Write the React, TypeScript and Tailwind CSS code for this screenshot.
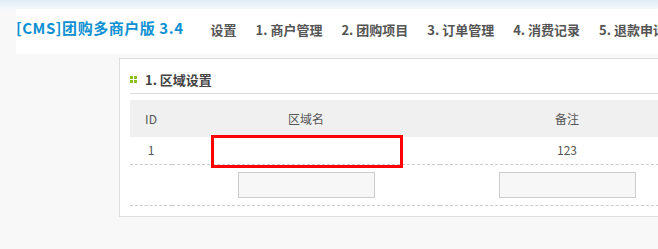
import React from 'react';

const navItems = ['设置', '1. 商户管理', '2. 团购项目', '3. 订单管理', '4. 消费记录', '5. 退款申请'];

const GreenDots: React.FC = () => (
  <span className="grid grid-cols-2 gap-px w-[7px] h-[7px] mr-[8px]">
    <span className="bg-[#8cbf1e]" />
    <span className="bg-[#8cbf1e]" />
    <span className="bg-[#8cbf1e]" />
    <span className="bg-[#8cbf1e]" />
  </span>
);

const App: React.FC = () => {
  return (
    <div className="w-[658px] h-[249px] overflow-hidden bg-[#f8f8f8] font-['Noto_Sans_CJK_SC','Microsoft_YaHei',sans-serif]">
      <div className="h-[9px] bg-gradient-to-b from-[#e2ecf7] to-[#f4f8fc]" />

      {/* header */}
      <div className="ml-4 h-[45px] pb-2 bg-white flex items-center whitespace-nowrap">
        <h1 className="text-[15px] font-bold text-[#0e90d2] leading-none tracking-[0.55px]">[CMS]团购多商户版 3.4</h1>
        <nav className="flex items-center gap-[19px] ml-[27px] mt-[3px] text-[13px] font-bold text-[#555] leading-none">
          {navItems.map((item) => (
            <span key={item}>{item}</span>
          ))}
        </nav>
      </div>

      {/* panel */}
      <div className="mt-1 ml-[119px] w-[620px] h-[159px] bg-white border border-[#dddddd] pl-[10px] pb-[10px]">
        <div className="flex items-center h-[35px] pt-[7px] border-b border-[#dddddd] text-[13px] font-bold text-[#444]">
          <GreenDots />
          <span>1. 区域设置</span>
        </div>
        <table className="mt-[6px] border-collapse text-[12px] text-[#555] table-fixed">
          <colgroup>
            <col className="w-[42px]" />
            <col className="w-[268px]" />
            <col className="w-[254px]" />
          </colgroup>
          <thead>
            <tr className="bg-[#f0f0f0] h-[37px]">
              <th className="font-normal text-center">ID</th>
              <th className="font-normal text-center">区域名</th>
              <th className="font-normal text-center">备注</th>
            </tr>
          </thead>
          <tbody>
            <tr className="h-[27px] border-b border-dashed border-[#cccccc]">
              <td className="text-center">1</td>
              <td className="relative">
                <div className="absolute left-[39px] -top-[2px] w-[192px] h-[33px] border-[3px] border-[#ff0000]" />
              </td>
              <td className="text-center">123</td>
            </tr>
            <tr className="h-[41px] border-b border-dashed border-[#cccccc]">
              <td />
              <td className="text-center">
                <input className="w-[137px] h-[26px] bg-[#f7f7f7] border border-[#cccccc] align-middle" />
              </td>
              <td className="text-center">
                <input className="w-[137px] h-[26px] bg-[#f7f7f7] border border-[#cccccc] align-middle" />
              </td>
            </tr>
          </tbody>
        </table>
      </div>
    </div>
  );
};

export default App;
